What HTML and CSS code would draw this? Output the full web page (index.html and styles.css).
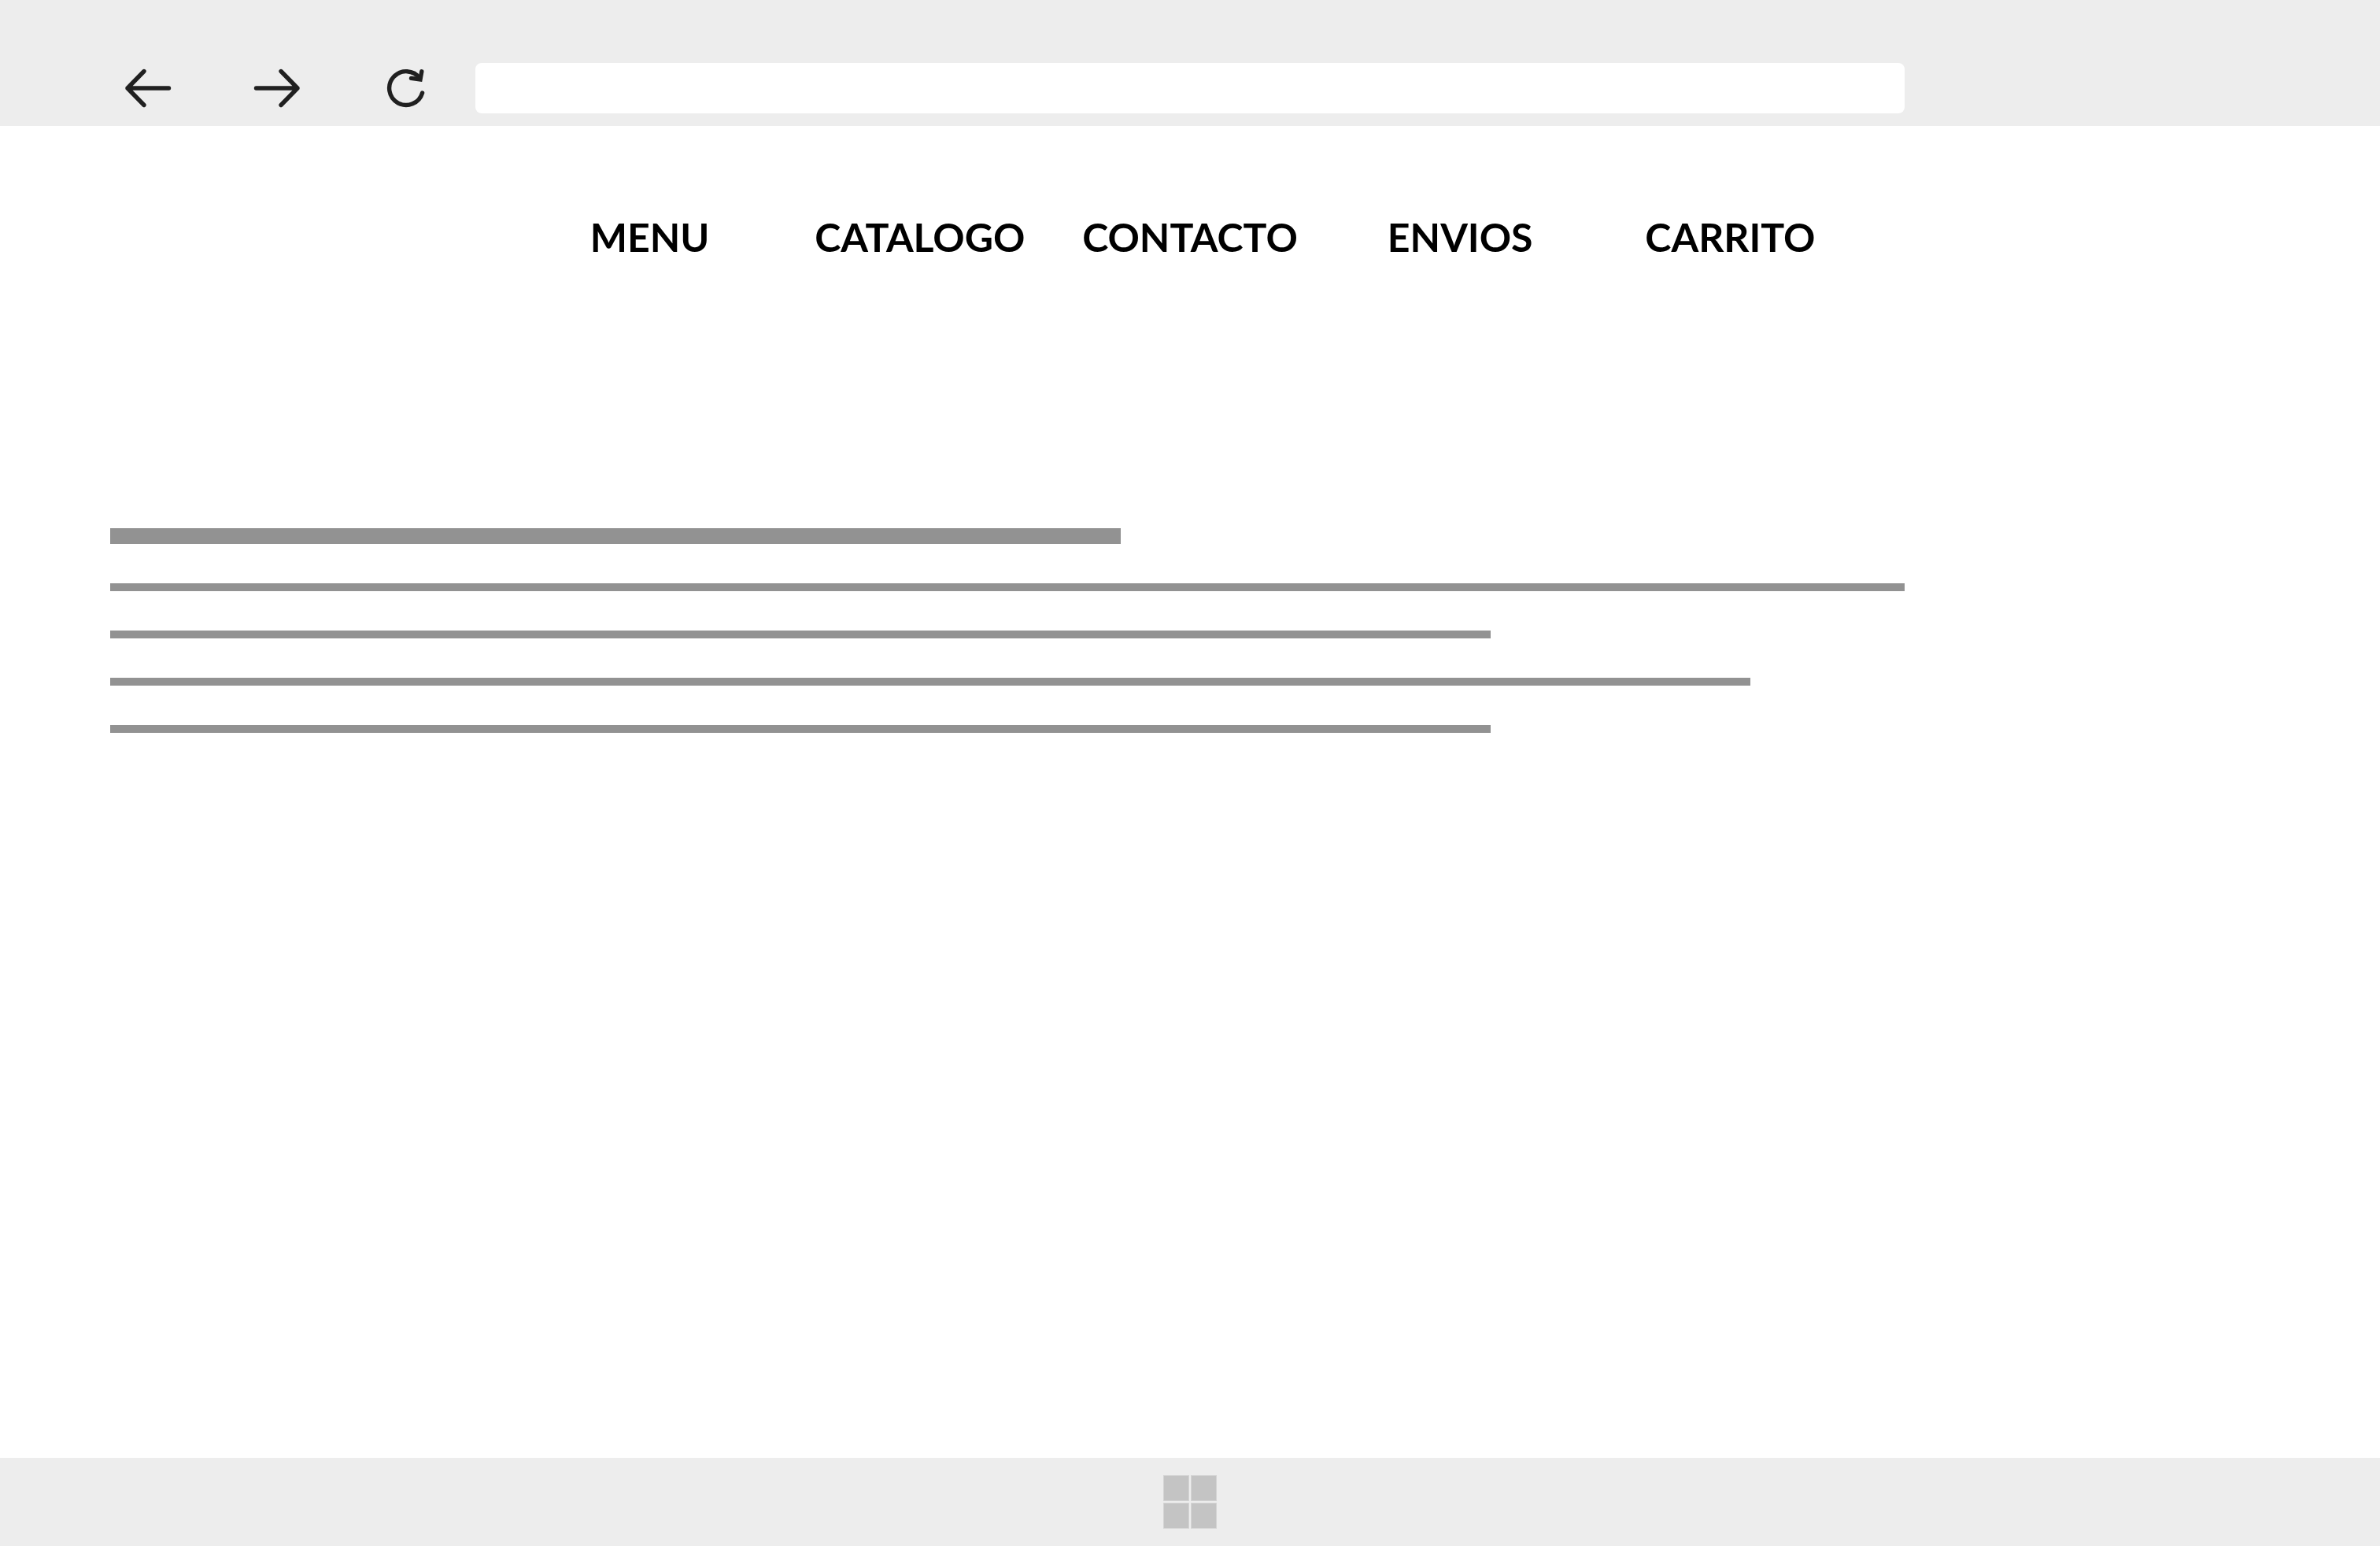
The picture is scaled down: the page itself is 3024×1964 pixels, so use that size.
FILE: index.html
```html
<!DOCTYPE html>
<html lang="es">
<head>
<meta charset="utf-8">
<meta name="viewport" content="width=device-width, initial-scale=1">
<title>Tienda</title>
<link rel="stylesheet" href="styles.css">
</head>
<body>
<header class="toolbar">
  <div class="toolbar-buttons">
    <button class="icon-button" type="button" aria-label="Atrás">
      <svg viewBox="0 0 64 64" aria-hidden="true"><path d="M58.5 32H6M27 10.5L6 32L27 53.5"/></svg>
    </button>
    <button class="icon-button" type="button" aria-label="Adelante">
      <svg viewBox="0 0 64 64" aria-hidden="true"><path d="M5.5 32H58M37 10.5L58 32L37 53.5"/></svg>
    </button>
    <button class="icon-button" type="button" aria-label="Recargar">
      <svg viewBox="0 0 64 64" aria-hidden="true"><path d="M52.6 38A21.400 21.400 0 1 1 49.500 19.700"/><path class="sharp" d="M51.800 10.800L50 21L38.500 19.400"/></svg>
    </button>
  </div>
  <input class="address" type="text" aria-label="Dirección">
</header>
<main class="page">
  <nav class="menu">
    <a href="#menu">MENU</a>
    <a href="#catalogo">CATALOGO</a>
    <a href="#contacto">CONTACTO</a>
    <a href="#envios">ENVIOS</a>
    <a href="#carrito">CARRITO</a>
  </nav>
  <div class="lines">
    <div class="line line-title"></div>
    <div class="line"></div>
    <div class="line line-short"></div>
    <div class="line line-medium"></div>
    <div class="line line-short"></div>
  </div>
</main>
<footer class="taskbar">
  <button class="start" type="button" aria-label="Inicio">
    <svg viewBox="0 0 68 68" aria-hidden="true"><path class="edge" d="M0 0H33V33H0ZM35 0H68V33H35ZM0 35H33V68H0ZM35 35H68V68H35Z"/><path d="M1 1H32V32H1ZM36 1H67V32H36ZM1 36H32V67H1ZM36 36H67V67H36Z"/></svg>
  </button>
</footer>
</body>
</html>
```
FILE: styles.css
```css
* {
  box-sizing: border-box;
}

body {
  margin: 0;
  min-height: 100vh;
  display: flex;
  flex-direction: column;
  background: #fff;
  color: #000;
  font-family: Lato, "Liberation Sans", sans-serif;
}

button {
  padding: 0;
  border: 0;
  background: none;
}

svg {
  display: block;
  width: 100%;
  height: 100%;
}

.toolbar {
  display: flex;
  gap: 56px;
  padding: 80px 604px 16px 156px;
  background: #ededed;
}

.toolbar-buttons {
  display: flex;
  gap: 100px;
}

.icon-button {
  width: 64px;
  height: 64px;
}

.icon-button path {
  fill: none;
  stroke: #202020;
  stroke-width: 5.400;
  stroke-linecap: round;
  stroke-linejoin: round;
}

.icon-button .sharp {
  stroke-linejoin: miter;
}

.address {
  flex: 1;
  min-width: 0;
  height: 64px;
  padding: 0 24px;
  border: 0;
  border-radius: 8px;
  background: #fff;
  font: inherit;
  font-size: 28px;
}

.page {
  flex: 1;
}

.menu {
  display: grid;
  grid-template-columns: repeat(5, 1fr);
  padding: 111px 654px 0;
}

.menu a {
  color: inherit;
  font-size: 50px;
  font-weight: 700;
  line-height: 60px;
  text-align: center;
  text-decoration: none;
}

.lines {
  display: flex;
  flex-direction: column;
  gap: 50px;
  padding: 340px 604px 0 140px;
}

.line {
  height: 10px;
  background: #929292;
}

.line-title {
  width: 56.3%;
  height: 20px;
}

.line-short {
  width: 76.93%;
}

.line-medium {
  width: 91.4%;
}

.taskbar {
  display: flex;
  justify-content: center;
  padding: 22px;
  background: #ededed;
}

.start {
  width: 68px;
  height: 68px;
}

.start path {
  fill: #c4c4c4;
}

.start .edge {
  fill: #d4d4d4;
}
```
